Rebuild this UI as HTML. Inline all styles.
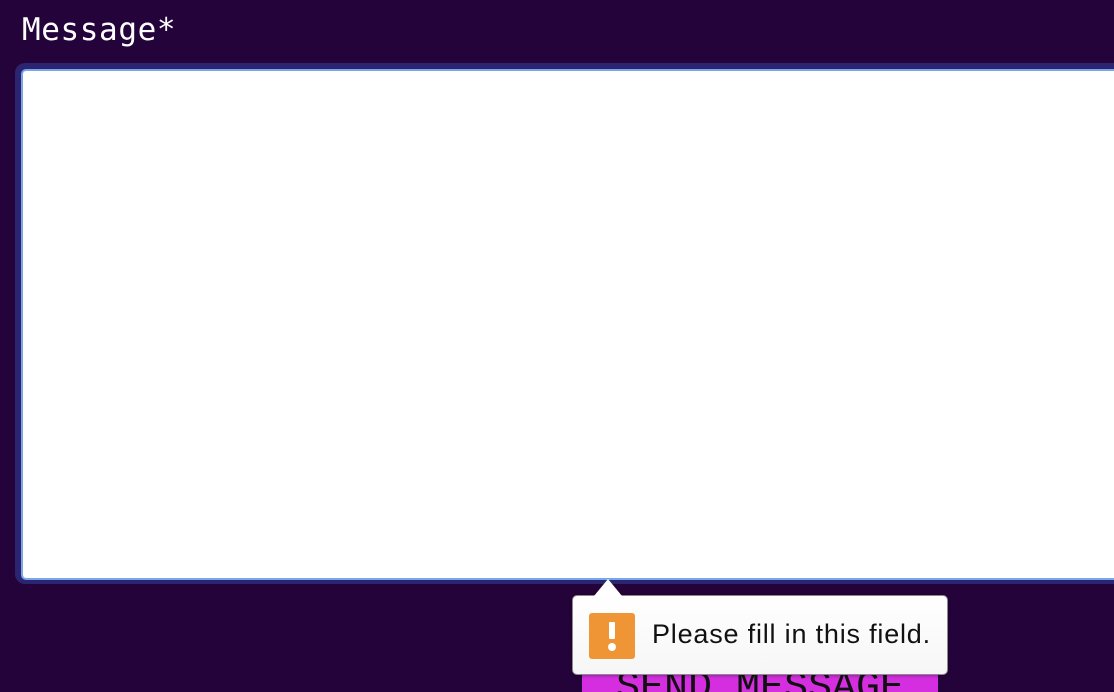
<!DOCTYPE html>
<html><head><style>
html,body{margin:0;padding:0;width:1114px;height:692px;overflow:hidden;}
body{background:#24033a;position:relative;font-family:"Liberation Sans",sans-serif;}
.lbl{position:absolute;left:22px;top:12px;font-family:"DejaVu Sans Mono","Liberation Mono",monospace;font-size:31px;letter-spacing:0.6px;color:#fff;}
.ring{position:absolute;left:15px;top:63px;width:1120px;height:521px;background:#2b2470;border-radius:10px;}
.ta{position:absolute;left:21px;top:69px;width:1110px;height:507px;background:#fff;border:2px solid #78a6ea;border-radius:5px;}
.btn{position:absolute;left:582px;top:662px;width:356px;height:30px;overflow:hidden;background:#d42ee0;}
.btn span{position:absolute;left:0;right:0;top:7px;text-align:center;color:#111;font-family:"Liberation Mono",monospace;font-size:40px;line-height:40px;}
.tip{position:absolute;left:572px;top:595px;width:374px;height:78px;background:linear-gradient(#fff,#f6f6f6);border:1px solid #8a8a8a;border-radius:5px;box-shadow:0 1px 3px rgba(0,0,0,.3);}
.arr{position:absolute;left:594px;top:579px;width:0;height:0;border-left:14px solid transparent;border-right:14px solid transparent;border-bottom:17px solid #fff;}
.ic{position:absolute;left:16px;top:17px;width:46px;height:46px;background:#f09536;border-radius:3px;}
.ic:before{content:"";position:absolute;left:20px;top:9px;width:6px;height:17px;background:#fff;border-radius:1px;}
.ic:after{content:"";position:absolute;left:19px;top:30px;width:8px;height:8px;background:#fff;border-radius:50%;}
.txt{position:absolute;left:79px;top:23px;font-size:27px;letter-spacing:0.8px;color:#111;white-space:nowrap;}
</style></head><body>
<div class="lbl">Message*</div>
<div class="ring"></div>
<div class="ta"></div>
<div class="btn"><span>SEND MESSAGE</span></div>
<div class="tip"><div class="ic"></div><div class="txt">Please fill in this field.</div></div>
<div class="arr"></div>
</body></html>
